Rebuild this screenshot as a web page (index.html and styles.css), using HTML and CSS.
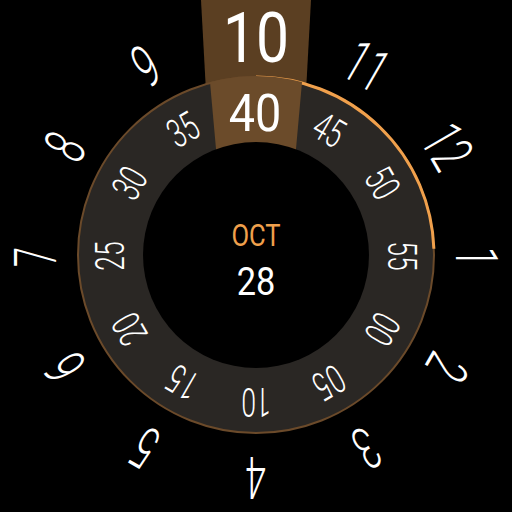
FILE: index.html
```html
<!DOCTYPE html>
<html>
<head>
<meta charset="utf-8">
<link rel="stylesheet" href="styles.css">
</head>
<body>
<div class="face">
<svg class="dial" viewBox="0 0 512 512" width="512" height="512">
  <defs>
    <clipPath id="ringclip"><circle cx="256" cy="255" r="179"/></clipPath>
  </defs>
  <polygon class="band-top" points="201,0 311,0 305,110 207,110"/>
  <circle class="ring" cx="256" cy="255" r="178"/>
  <path class="sec" d="M256 77 A178 178 0 0 1 433.9 248.8"/>
  <polygon class="band-low" clip-path="url(#ringclip)" points="208,60 304,60 295,160 217,160"/>
  <circle class="inner" cx="256" cy="255" r="113"/>

  <g class="minutes">
    <g transform="translate(256 256) rotate(30) translate(0 -146)"><text transform="scale(.66 1)" y="14">45</text></g>
    <g transform="translate(256 256) rotate(60) translate(0 -146)"><text transform="scale(.66 1)" y="14">50</text></g>
    <g transform="translate(256 256) rotate(90) translate(0 -146)"><text transform="scale(.66 1)" y="14">55</text></g>
    <g transform="translate(256 256) rotate(120) translate(0 -146)"><text transform="scale(.66 1)" y="14">00</text></g>
    <g transform="translate(256 256) rotate(150) translate(0 -146)"><text transform="scale(.66 1)" y="14">05</text></g>
    <g transform="translate(256 256) rotate(180) translate(0 -146)"><text transform="scale(.66 1)" y="14">10</text></g>
    <g transform="translate(256 256) rotate(210) translate(0 -146)"><text transform="scale(.66 1)" y="14">15</text></g>
    <g transform="translate(256 256) rotate(240) translate(0 -146)"><text transform="scale(.66 1)" y="14">20</text></g>
    <g transform="translate(256 256) rotate(270) translate(0 -146)"><text transform="scale(.66 1)" y="14">25</text></g>
    <g transform="translate(256 256) rotate(300) translate(0 -146)"><text transform="scale(.66 1)" y="14">30</text></g>
    <g transform="translate(256 256) rotate(330) translate(0 -146)"><text transform="scale(.66 1)" y="14">35</text></g>
  </g>

  <g class="hours">
    <g transform="translate(256 257) rotate(30) translate(0 -221)"><text transform="scale(.62 1)" y="21">11</text></g>
    <g transform="translate(256 257) rotate(60) translate(0 -221)"><text transform="scale(.62 1)" y="21">12</text></g>
    <g transform="translate(256 257) rotate(90) translate(0 -221)"><text transform="scale(.62 1)" y="21">1</text></g>
    <g transform="translate(256 257) rotate(120) translate(0 -221)"><text transform="scale(.62 1)" y="21">2</text></g>
    <g transform="translate(256 257) rotate(150) translate(0 -221)"><text transform="scale(.62 1)" y="21">3</text></g>
    <g transform="translate(256 257) rotate(180) translate(0 -221)"><text transform="scale(.62 1)" y="21">4</text></g>
    <g transform="translate(256 257) rotate(210) translate(0 -221)"><text transform="scale(.62 1)" y="21">5</text></g>
    <g transform="translate(256 257) rotate(240) translate(0 -221)"><text transform="scale(.62 1)" y="21">6</text></g>
    <g transform="translate(256 257) rotate(270) translate(0 -221)"><text transform="scale(.62 1)" y="21">7</text></g>
    <g transform="translate(256 257) rotate(300) translate(0 -221)"><text transform="scale(.62 1)" y="21">8</text></g>
    <g transform="translate(256 257) rotate(330) translate(0 -221)"><text transform="scale(.62 1)" y="21">9</text></g>
  </g>

  <g transform="translate(256 62)"><text class="cur-hour" transform="scale(.84 1)">10</text></g>
  <g transform="translate(255 131)"><text class="cur-min" transform="scale(.9 1)">40</text></g>

  <g transform="translate(256 246)"><text class="month" transform="scale(.8 1)">OCT</text></g>
  <g transform="translate(256 295)"><text class="day" transform="scale(.88 1)">28</text></g>
</svg>
</div>
</body>
</html>
```

FILE: styles.css
```css
html, body {
  margin: 0;
  padding: 0;
  background: #000;
}
.face {
  width: 512px;
  height: 512px;
  background: #000;
  overflow: hidden;
}
.dial {
  display: block;
}
.band-top {
  fill: #5b3f22;
}
.band-low {
  fill: #6b4b2a;
}
.ring {
  fill: #2a2724;
  stroke: #6b4a2a;
  stroke-width: 2;
}
.sec {
  fill: none;
  stroke: #f0a04c;
  stroke-width: 3;
}
.inner {
  fill: #000;
}
.dial text {
  font-family: Roboto, "Noto Sans", sans-serif;
  text-anchor: middle;
  fill: #fff;
}
.minutes text {
  font-size: 40px;
  font-weight: 300;
}
.hours text {
  font-size: 59px;
  font-weight: 300;
}
.dial .cur-hour {
  font-size: 70px;
  font-weight: 400;
}
.dial .cur-min {
  font-size: 52px;
  font-weight: 400;
}
.dial .month {
  font-size: 32px;
  font-weight: 400;
  fill: #f0a04c;
}
.dial .day {
  font-size: 39px;
  font-weight: 400;
}
```
